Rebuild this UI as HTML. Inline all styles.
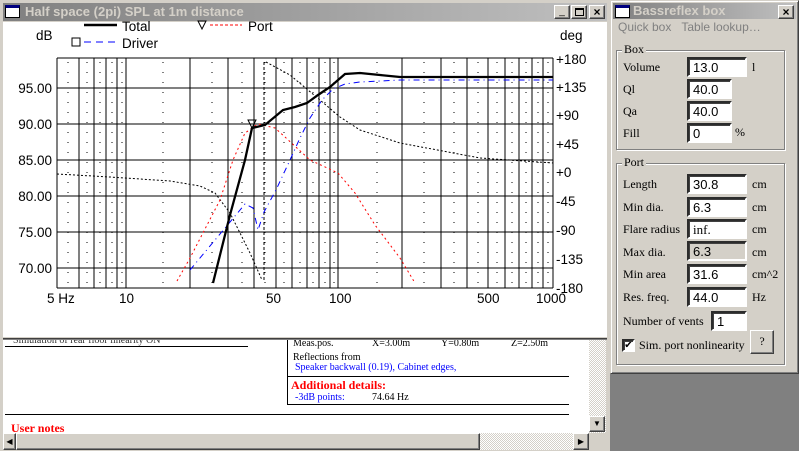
<!DOCTYPE html>
<html><head><meta charset="utf-8"><style>
*{margin:0;padding:0;box-sizing:border-box}
body{width:799px;height:451px;overflow:hidden;background:#808080;position:relative;font-family:"Liberation Sans",sans-serif}
.abs{position:absolute}
.tb{background:linear-gradient(90deg,#808080,#c0c0c0);color:#d4d0c8;font-weight:bold;font-size:13px;line-height:18px}
.btn{background:#d4d0c8;border:1px solid;border-color:#fff #404040 #404040 #fff;box-shadow:inset -1px -1px #808080}
.ser{font-family:"Liberation Serif",serif;font-size:12px;color:#000}
.inp{background:#fff;border:2px inset #a0a0a0;border-color:#808080 #fff #fff #808080;box-shadow:inset 1px 1px #404040;font-size:13px;padding:1px 0 0 4px;line-height:15px}
.grp{border:1px solid #808080;box-shadow:1px 1px #fff,inset 1px 1px #fff}
.gl{background:#d4d0c8;padding:0 2px;font-family:"Liberation Serif",serif;font-size:12px}
.dith{background-color:#d4d0c8;background-image:repeating-conic-gradient(#fff 0 25%,#d4d0c8 0 50%);background-size:2px 2px}
</style></head><body>
<div class="abs" style="left:0;top:0;width:610px;height:451px;background:#d4d0c8"></div>
<div class="abs tb" style="left:3px;top:3px;width:604px;height:18px;padding-left:22px">Half space (2pi) SPL at 1m distance</div>
<div class="abs" style="left:5px;top:5px;width:15px;height:13px;background:#fff;border:1px solid #000;border-top:3px solid #000080"></div>
<div class="abs btn" style="left:554px;top:5px;width:16px;height:14px;font-size:10px;text-align:center;line-height:12px">_</div>
<div class="abs btn" style="left:571px;top:5px;width:16px;height:14px"><div style="margin:2px 3px;width:9px;height:8px;border:1px solid #000;border-top-width:2px"></div></div>
<div class="abs btn" style="left:589px;top:5px;width:16px;height:14px;font-size:12px;font-weight:bold;text-align:center;line-height:12px">×</div>
<div class="abs" style="left:3px;top:22px;width:604px;height:315px;background:#fff"></div>
<svg class="abs" style="left:0;top:0" width="610" height="340" font-family="Liberation Sans" font-size="13.5">
<text x="36" y="40">dB</text><text x="560" y="40">deg</text>
<line x1="84" y1="25" x2="117" y2="25" stroke="#000" stroke-width="2.5"/><text x="122" y="31">Total</text>
<rect x="72" y="38" width="8" height="8" fill="none" stroke="#000"/>
<line x1="84" y1="42" x2="117" y2="42" stroke="#00f" stroke-dasharray="7,5"/><text x="122" y="48">Driver</text>
<polygon points="198,21 206,21 202,29" fill="none" stroke="#000"/>
<line x1="210" y1="25" x2="242" y2="25" stroke="#f00" stroke-dasharray="3,2"/><text x="248" y="31">Port</text>
<g stroke="#000" stroke-width="1">
<line x1="57" y1="58" x2="553" y2="58"/><line x1="57" y1="288" x2="553" y2="288"/>
<line x1="57" y1="88" x2="553" y2="88"/><line x1="57" y1="124" x2="553" y2="124"/><line x1="57" y1="160" x2="553" y2="160"/><line x1="57" y1="196" x2="553" y2="196"/><line x1="57" y1="232" x2="553" y2="232"/><line x1="57" y1="268" x2="553" y2="268"/>
<line x1="57" y1="58" x2="57" y2="288"/><line x1="79" y1="58" x2="79" y2="288"/><line x1="94" y1="58" x2="94" y2="288"/><line x1="106" y1="58" x2="106" y2="288"/><line x1="117" y1="58" x2="117" y2="288"/><line x1="126" y1="58" x2="126" y2="288"/>
<line x1="190" y1="58" x2="190" y2="288"/><line x1="228" y1="58" x2="228" y2="288"/><line x1="254" y1="58" x2="254" y2="288"/><line x1="276" y1="58" x2="276" y2="288"/><line x1="292" y1="58" x2="292" y2="288"/><line x1="307" y1="58" x2="307" y2="288"/><line x1="319" y1="58" x2="319" y2="288"/><line x1="330" y1="58" x2="330" y2="288"/><line x1="338" y1="58" x2="338" y2="288"/>
<line x1="402" y1="58" x2="402" y2="288"/><line x1="441" y1="58" x2="441" y2="288"/><line x1="467" y1="58" x2="467" y2="288"/><line x1="488" y1="58" x2="488" y2="288"/><line x1="505" y1="58" x2="505" y2="288"/><line x1="519" y1="58" x2="519" y2="288"/><line x1="532" y1="58" x2="532" y2="288"/><line x1="543" y1="58" x2="543" y2="288"/><line x1="553" y1="58" x2="553" y2="288"/>
</g>
<g stroke="#000" stroke-dasharray="1,9">
<line x1="68" y1="62" x2="68" y2="288"/><line x1="87" y1="62" x2="87" y2="288"/><line x1="100" y1="62" x2="100" y2="288"/><line x1="112" y1="62" x2="112" y2="288"/><line x1="122" y1="62" x2="122" y2="288"/><line x1="163" y1="62" x2="163" y2="288"/><line x1="212" y1="62" x2="212" y2="288"/><line x1="242" y1="62" x2="242" y2="288"/><line x1="265" y1="62" x2="265" y2="288"/><line x1="284" y1="62" x2="284" y2="288"/><line x1="300" y1="62" x2="300" y2="288"/><line x1="313" y1="62" x2="313" y2="288"/><line x1="325" y1="62" x2="325" y2="288"/><line x1="334" y1="62" x2="334" y2="288"/>
<line x1="377" y1="62" x2="377" y2="288"/><line x1="424" y1="62" x2="424" y2="288"/><line x1="454" y1="62" x2="454" y2="288"/><line x1="478" y1="62" x2="478" y2="288"/><line x1="497" y1="62" x2="497" y2="288"/><line x1="512" y1="62" x2="512" y2="288"/><line x1="526" y1="62" x2="526" y2="288"/><line x1="538" y1="62" x2="538" y2="288"/><line x1="548" y1="62" x2="548" y2="288"/>
</g>
<polyline fill="none" stroke="#000" stroke-dasharray="2,2" points="57,174 110,177 170,181 200,186 215,193 230,213 250,253 262,280"/>
<polyline fill="none" stroke="#000" stroke-dasharray="3,2" points="264,280 264,60"/>
<polyline fill="none" stroke="#000" stroke-dasharray="2,2" points="266,62 290,75 320,100 340,117 360,130 400,143 480,158 553,163"/>
<polyline fill="none" stroke="#f00" stroke-dasharray="2,3" points="177,281 190,258 220,200 233,160 245,133 258,124 275,128 285,137 310,160 338,173 355,193 375,225 400,258 415,283"/>
<polyline fill="none" stroke="#00f" stroke-dasharray="6,4,1,4" points="190,270 215,240 230,222 245,204 253,208 258,230 264,212 276,190 290,160 300,138 310,118 322,100 333,89 345,84 360,82 400,80 553,80"/>
<polyline fill="none" stroke="#000" stroke-width="2.3" points="213,283 230,215 245,160 252,128 265,125 283,110 295,107 307,103 318,95 330,87 345,74 360,73 380,75 400,77 553,77"/>
<polygon points="248,120 256,120 252,128" fill="none" stroke="#000"/>
<g text-anchor="end"><text x="52" y="93">95.00</text><text x="52" y="129">90.00</text><text x="52" y="165">85.00</text><text x="52" y="201">80.00</text><text x="52" y="237">75.00</text><text x="52" y="273">70.00</text></g>
<text x="556" y="64">+180</text><text x="556" y="92">+135</text><text x="556" y="120">+90</text><text x="556" y="149">+45</text><text x="556" y="177">+0</text><text x="556" y="206">-45</text><text x="556" y="235">-90</text><text x="556" y="264">-135</text><text x="556" y="293">-180</text>
<text x="47" y="303">5 Hz</text><text x="119" y="303">10</text><text x="266" y="303">50</text><text x="329" y="303">100</text><text x="477" y="303">500</text><text x="536" y="303">1000</text>
</svg>
<div class="abs" style="left:3px;top:338px;width:604px;height:2px;background:#404040;border-bottom:1px solid #808080"></div>
<div class="abs" style="left:3px;top:340px;width:586px;height:93px;background:#fff;overflow:hidden">
<div class="abs" style="left:10px;top:-5px;font-family:'Liberation Serif';font-size:10px;color:#333">Simulation of rear floor linearity ON</div>
<div class="abs" style="left:2px;top:6px;width:243px;height:1px;background:#000"></div>
<div class="abs" style="left:284px;top:-2px;width:1px;height:66px;background:#000"></div>
<div class="abs" style="left:284px;top:36px;width:282px;height:1px;background:#000"></div>
<div class="abs" style="left:284px;top:64px;width:282px;height:1px;background:#000"></div>
<div class="abs" style="left:2px;top:74px;width:564px;height:1px;background:#000"></div>
<div class="abs ser" style="left:290px;top:-2px;font-size:10px">Meas.pos.</div>
<div class="abs ser" style="left:369px;top:-2px;font-size:10px">X=3.00m</div>
<div class="abs ser" style="left:438px;top:-2px;font-size:10px">Y=0.80m</div>
<div class="abs ser" style="left:508px;top:-2px;font-size:10px">Z=2.50m</div>
<div class="abs ser" style="left:290px;top:12px;font-size:10px">Reflections from</div>
<div class="abs ser" style="left:292px;top:22px;font-size:10px;color:#00f">Speaker backwall (0.19), Cabinet edges,</div>
<div class="abs ser" style="left:288px;top:38px;font-size:12px;color:#f00;font-weight:bold">Additional details:</div>
<div class="abs ser" style="left:292px;top:52px;font-size:10px;color:#00f">-3dB points:</div>
<div class="abs ser" style="left:369px;top:52px;font-size:10px">74.64 Hz</div>
<div class="abs ser" style="left:8px;top:81px;font-size:12px;color:#f00;font-weight:bold">User notes</div>
</div>
<div class="abs dith" style="left:589px;top:340px;width:17px;height:93px"></div>
<div class="abs btn" style="left:589px;top:416px;width:16px;height:16px;font-size:8px;text-align:center;line-height:14px">▼</div>
<div class="abs dith" style="left:3px;top:433px;width:586px;height:17px"></div>
<div class="abs btn" style="left:3px;top:433px;width:13px;height:17px;font-size:8px;text-align:center;line-height:15px">◀</div>
<div class="abs btn" style="left:16px;top:433px;width:464px;height:17px"></div>
<div class="abs btn" style="left:573px;top:433px;width:16px;height:17px;font-size:8px;text-align:center;line-height:15px">▶</div>
<div class="abs" style="left:589px;top:433px;width:17px;height:17px;background:#d4d0c8"></div>
<div class="abs" style="left:610px;top:0;width:189px;height:374px;background:#d4d0c8;border:1px solid;border-color:#d4d0c8 #404040 #404040 #d4d0c8;box-shadow:inset 1px 1px #fff,inset -1px -1px #808080"></div>
<div class="abs tb" style="left:613px;top:3px;width:183px;height:16px;padding-left:20px;line-height:16px">Bassreflex box</div>
<div class="abs" style="left:615px;top:5px;width:15px;height:13px;background:#fff;border:1px solid #000;border-top:3px solid #000080"></div>
<div class="abs btn" style="left:778px;top:5px;width:16px;height:14px;font-size:12px;font-weight:bold;text-align:center;line-height:12px">×</div>
<div class="abs" style="left:618px;top:20px;font-size:12px;color:#808080">Quick box&nbsp;&nbsp;&nbsp;Table lookup…</div>
<div class="abs grp" style="left:616px;top:50px;width:169px;height:100px"></div>
<div class="abs gl" style="left:622px;top:42px">Box</div>
<div class="abs ser" style="left:623px;top:60px">Volume</div><div class="abs inp" style="left:687px;top:57px;width:60px;height:20px">13.0</div><div class="abs ser" style="left:752px;top:60px">l</div>
<div class="abs ser" style="left:623px;top:82px">Ql</div><div class="abs inp" style="left:687px;top:79px;width:45px;height:20px">40.0</div>
<div class="abs ser" style="left:623px;top:104px">Qa</div><div class="abs inp" style="left:687px;top:101px;width:45px;height:20px">40.0</div>
<div class="abs ser" style="left:623px;top:126px">Fill</div><div class="abs inp" style="left:687px;top:123px;width:45px;height:20px">0</div><div class="abs ser" style="left:735px;top:125px">%</div>
<div class="abs grp" style="left:616px;top:163px;width:169px;height:202px"></div>
<div class="abs gl" style="left:622px;top:155px">Port</div>
<div class="abs ser" style="left:623px;top:177px">Length</div><div class="abs inp" style="left:687px;top:174px;width:60px;height:20px">30.8</div><div class="abs ser" style="left:752px;top:177px">cm</div>
<div class="abs ser" style="left:623px;top:200px">Min dia.</div><div class="abs inp" style="left:687px;top:197px;width:60px;height:20px">6.3</div><div class="abs ser" style="left:752px;top:200px">cm</div>
<div class="abs ser" style="left:623px;top:222px">Flare radius</div><div class="abs inp" style="left:687px;top:219px;width:60px;height:20px;font-family:'Liberation Serif'">inf.</div><div class="abs ser" style="left:752px;top:222px">cm</div>
<div class="abs ser" style="left:623px;top:245px">Max dia.</div><div class="abs inp" style="left:687px;top:241px;width:60px;height:20px;background:#d4d0c8">6.3</div><div class="abs ser" style="left:752px;top:245px">cm</div>
<div class="abs ser" style="left:623px;top:267px">Min area</div><div class="abs inp" style="left:687px;top:264px;width:60px;height:20px">31.6</div><div class="abs ser" style="left:752px;top:267px">cm^2</div>
<div class="abs ser" style="left:623px;top:290px">Res. freq.</div><div class="abs inp" style="left:687px;top:287px;width:60px;height:20px">44.0</div><div class="abs ser" style="left:752px;top:290px">Hz</div>
<div class="abs ser" style="left:623px;top:314px">Number of vents</div><div class="abs inp" style="left:711px;top:311px;width:36px;height:20px">1</div>
<div class="abs inp" style="left:622px;top:339px;width:13px;height:13px;padding:0;font-size:10px;line-height:10px;text-align:center">✔</div>
<div class="abs ser" style="left:639px;top:338px">Sim. port nonlinearity</div>
<div class="abs btn" style="left:750px;top:330px;width:24px;height:24px;font-family:'Liberation Serif';font-size:12px;text-align:center;line-height:20px">?</div>
</body></html>
